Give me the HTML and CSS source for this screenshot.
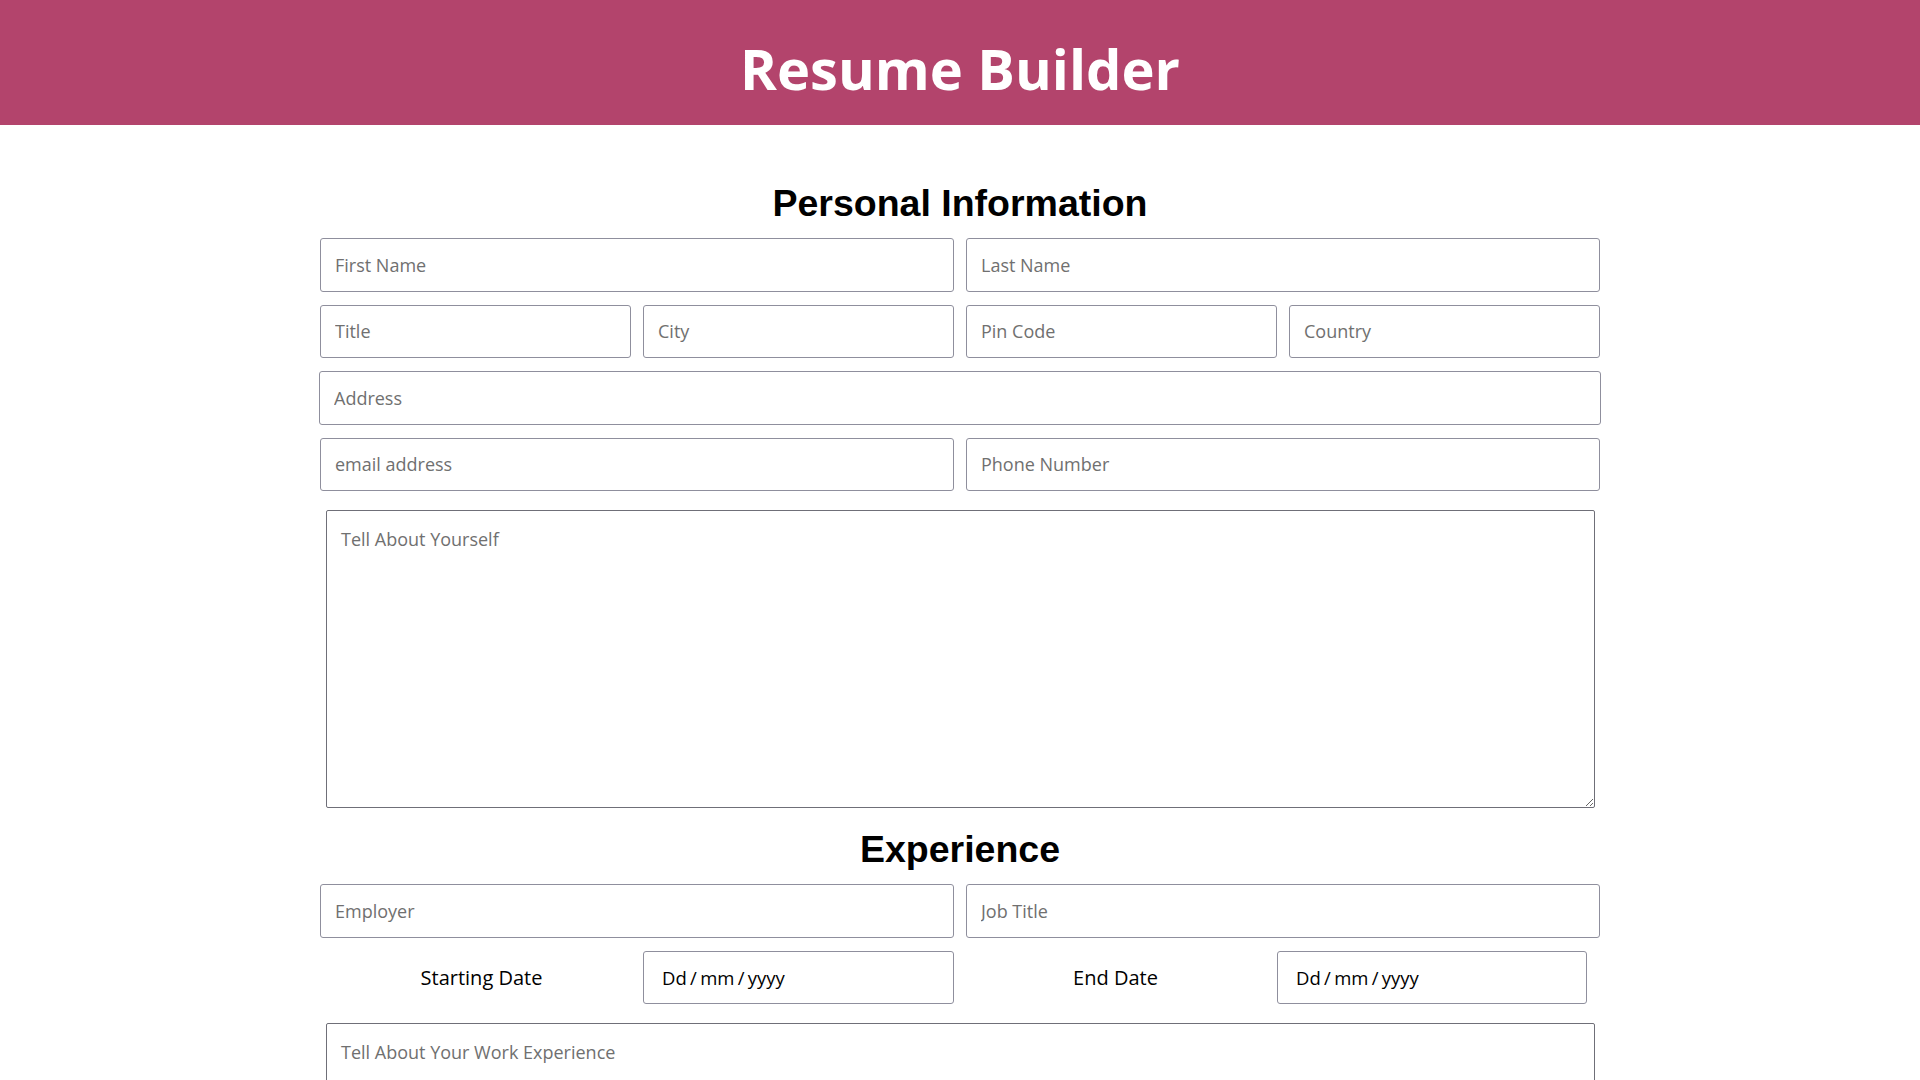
FILE: index.html
```html
<!DOCTYPE html>
<html lang="en">
<head>
<meta charset="utf-8">
<title>Resume Builder</title>
<link rel="stylesheet" href="styles.css">
</head>
<body>
<header class="topbar">
  <h1 class="brand">Resume Builder</h1>
</header>
<main class="container">
  <h2 class="section-title first">Personal Information</h2>
  <div class="rows">
    <div class="row cols-2">
      <input class="field" type="text" placeholder="First Name">
      <input class="field" type="text" placeholder="Last Name">
    </div>
    <div class="row cols-4">
      <input class="field" type="text" placeholder="Title">
      <input class="field" type="text" placeholder="City">
      <input class="field" type="text" placeholder="Pin Code">
      <input class="field" type="text" placeholder="Country">
    </div>
    <div class="row">
      <input class="field wide" type="text" placeholder="Address">
    </div>
    <div class="row cols-2">
      <input class="field" type="email" placeholder="email address">
      <input class="field" type="tel" placeholder="Phone Number">
    </div>
  </div>
  <textarea class="area" placeholder="Tell About Yourself"></textarea>

  <h2 class="section-title">Experience</h2>
  <div class="rows">
    <div class="row cols-2">
      <input class="field" type="text" placeholder="Employer">
      <input class="field" type="text" placeholder="Job Title">
    </div>
    <div class="row dates">
      <label class="date-label" for="start">Starting Date</label>
      <input class="field date" id="start" type="text" placeholder="Dd / mm / yyyy">
      <label class="date-label" for="end">End Date</label>
      <input class="field date" id="end" type="text" placeholder="Dd / mm / yyyy">
    </div>
  </div>
  <textarea class="area" placeholder="Tell About Your Work Experience"></textarea>
</main>
</body>
</html>
```
FILE: styles.css
```css
* { box-sizing: border-box; }

body {
  margin: 0;
  font-family: "Open Sans", "Noto Sans", sans-serif;
  color: #000;
  background: #fff;
}

.topbar {
  height: 125px;
  background: #b3446c;
  padding-top: 40px;
}

.brand {
  margin: 0;
  text-align: center;
  color: #fff;
  font-family: "Open Sans", sans-serif;
  font-weight: 700;
  font-size: 56px;
  line-height: 56px;
}

.container {
  width: 1280px;
  margin: 0 auto;
  padding-bottom: 40px;
}

.section-title {
  margin: 20px 0 14px;
  text-align: center;
  font-family: "Liberation Sans", Arial, sans-serif;
  font-weight: 700;
  font-size: 37.5px;
  line-height: 42px;
}

.section-title.first {
  margin-top: 57px;
  margin-bottom: 14px;
}

.rows {
  display: flex;
  flex-direction: column;
  gap: 13px;
}

.row {
  display: grid;
  grid-template-columns: 1fr;
  column-gap: 12px;
}

.row.cols-2 { grid-template-columns: 1fr 1fr; }
.row.cols-4 { grid-template-columns: repeat(4, 1fr); }

.row.dates {
  grid-template-columns: 323px 311px 323px 310px;
  column-gap: 0;
  align-items: center;
}

.field {
  display: block;
  width: 100%;
  height: 53.5px;
  margin: 0;
  padding: 0 14px;
  border: 1px solid #8f8f9d;
  border-radius: 3px;
  background: #fff;
  font-family: "Open Sans", sans-serif;
  font-size: 18px;
  color: #000;
  outline: none;
}

.field::placeholder { color: #707070; opacity: 1; }

.field.wide {
  width: calc(100% + 2px);
  margin-left: -1px;
}

.date-label {
  text-align: center;
  font-size: 20px;
  color: #000;
}

.field.date {
  padding-left: 18px;
  font-size: 18.5px;
  word-spacing: -1.5px;
}

.field.date::placeholder { color: #000; }

.area {
  display: block;
  width: 1269px;
  height: 298px;
  margin: 19px 0 0 6px;
  padding: 16px 14px;
  border: 1px solid #6f6f78;
  border-radius: 2px;
  font-family: "Open Sans", sans-serif;
  font-size: 18px;
  line-height: 24px;
  color: #000;
  resize: both;
  outline: none;
}

.area::placeholder { color: #707070; opacity: 1; }
```
